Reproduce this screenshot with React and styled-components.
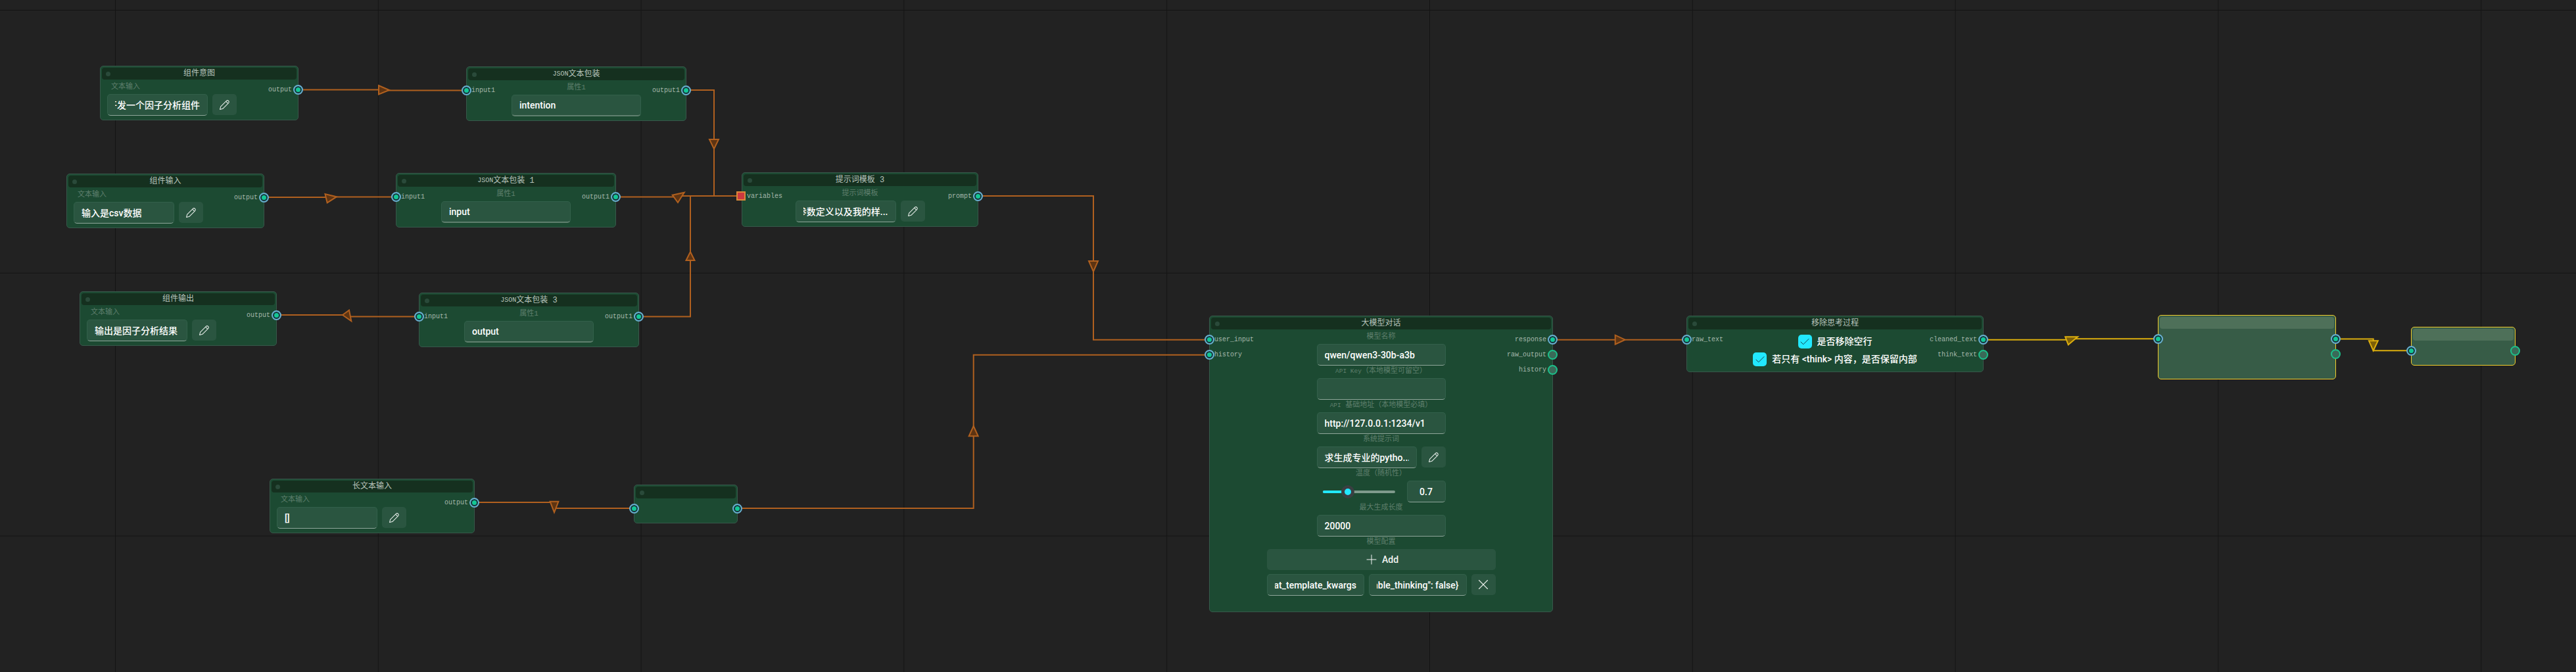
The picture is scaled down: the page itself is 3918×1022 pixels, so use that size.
import styled, { createGlobalStyle } from "styled-components";
import { Plus, X, Check } from "lucide-react";

const GlobalStyle = createGlobalStyle`
    html, body {
        margin: 0;
        padding: 0;
        background: #222222;
        overflow: hidden;
    }
`;

const MONO = `"Liberation Mono", "Noto Sans CJK SC", monospace`;
const UI = `Roboto, "Noto Sans CJK SC", sans-serif`;

const Canvas = styled.div`
    position: relative;
    width: 3918px;
    height: 1022px;
    overflow: hidden;
    background-color: #222222;
    background-image:
        linear-gradient(to right, #141414 1px, transparent 1px),
        linear-gradient(to bottom, #141414 1px, transparent 1px);
    background-size: 399.8px 399.8px;
    background-position: 175px 15px;
`;

const WireLayer = styled.svg`
    position: absolute;
    left: 0;
    top: 0;
    width: 3918px;
    height: 1022px;
    pointer-events: none;
`;

const NodeBox = styled.div`
    position: absolute;
    left: ${(p) => p.$x}px;
    top: ${(p) => p.$y}px;
    width: ${(p) => p.$w}px;
    height: ${(p) => p.$h}px;
    box-sizing: border-box;
    display: flex;
    flex-direction: column;
    border-radius: 5px;
    background: ${(p) => (p.$selected ? "#375c47" : "#1c4a32")};
    border: 1px solid ${(p) => (p.$selected ? "#f2cc2c" : "#37584a")};
`;

const Header = styled.div`
    position: relative;
    flex: none;
    height: 18px;
    margin: 2px 2px 0;
    border-radius: 4px;
    background: ${(p) => (p.$selected ? "#4e7059" : "#15301f")};
    display: flex;
    align-items: center;
    justify-content: center;
    font: 12px/18px ${MONO};
    color: #b8c4bc;
    white-space: nowrap;
`;

const Latin = styled.span`
    font-size: ${(p) => p.$size}px;
`;

const Dot = styled.span`
    position: absolute;
    left: 6px;
    top: 6px;
    width: 7px;
    height: 7px;
    border-radius: 50%;
    background: #2a4a3a;
`;

const Body = styled.div`
    flex: 1;
    display: grid;
    grid-template-columns: ${(p) => p.$cols};
    padding: 3px 0 0 ${(p) => p.$pad || 0}px;
`;

const Ports = styled.div`
    display: flex;
    flex-direction: column;
    padding-top: 1px;
    align-items: ${(p) => (p.$side === "right" ? "flex-end" : "flex-start")};
`;

const PortRow = styled.div`
    position: relative;
    height: 23px;
    display: flex;
    align-items: center;
    padding: ${(p) => (p.$side === "right" ? "0 9px 0 0" : "0 0 0 7px")};
    font: 10px/12px ${MONO};
    color: #a6b8ac;
    white-space: nowrap;
`;

const Socket = styled.span`
    position: absolute;
    top: 4px;
    ${(p) => (p.$side === "right" ? "right: -8px;" : "left: -8px;")}
    width: 15px;
    height: 15px;
    box-sizing: border-box;
    border-radius: 50%;
    border: 2px solid ${(p) => (p.$free ? "#1cc08a" : "#6aaed0")};
    background: ${(p) => (p.$free ? "#3a6a58" : "#13c795")};
    box-shadow: ${(p) => (p.$free ? "none" : "inset 0 0 0 2px #17303a")};
`;

const SquareSocket = styled.span`
    position: absolute;
    top: 4px;
    left: -9px;
    width: 14px;
    height: 14px;
    box-sizing: border-box;
    border: 2px solid #d98a3a;
    background: #cc3a3f;
`;

const Stack = styled.div`
    display: flex;
    flex-direction: column;
    align-items: center;
    min-width: 0;
`;

const FieldLabel = styled.div`
    align-self: ${(p) => (p.$left ? "flex-start" : "center")};
    height: 19px;
    padding-left: ${(p) => (p.$left ? 6 : 0)}px;
    font: 11px/16px ${MONO};
    color: #5f7f6d;
    white-space: nowrap;
`;

const Field = styled.div`
    box-sizing: border-box;
    flex: ${(p) => (p.$grow ? 1 : "none")};
    width: ${(p) => (p.$w ? `${p.$w}px` : "auto")};
    min-width: 0;
    height: 33px;
    padding: 0 11px;
    display: flex;
    align-items: center;
    justify-content: ${(p) => (p.$center ? "center" : "flex-start")};
    background: #2a5540;
    border: 1px solid #32604a;
    border-bottom: ${(p) => (p.$thick ? "2px solid #5f7f6e" : "1px solid #8fa69a")};
    border-radius: 5px;
    font: 500 14px/20px ${UI};
    color: #ffffff;
`;

const FieldText = styled.div`
    flex: 1;
    min-width: 0;
    display: flex;
    justify-content: ${(p) => (p.$end ? "flex-end" : "flex-start")};
    overflow: hidden;
    white-space: nowrap;
`;

const FieldRow = styled.div`
    width: ${(p) => p.$w}px;
    display: flex;
    gap: 7px;
    align-items: flex-start;
`;

const IconButton = styled.div`
    flex: none;
    width: 37px;
    height: 32px;
    display: flex;
    align-items: center;
    justify-content: center;
    border-radius: 5px;
    background: #2a5540;
    color: #e8eeea;
`;

const SliderRow = styled.div`
    width: 196px;
    height: 33px;
    display: flex;
    align-items: center;
    justify-content: space-between;
    padding-left: 9px;
    box-sizing: border-box;
`;

const Track = styled.div`
    position: relative;
    width: 110px;
    height: 4px;
    border-radius: 2px;
    background: #7f9a8c;
`;

const TrackFill = styled.div`
    height: 4px;
    border-radius: 2px;
    background: #22e8ff;
`;

const Knob = styled.div`
    position: absolute;
    top: -8px;
    width: 20px;
    height: 20px;
    margin-left: -10px;
    box-sizing: border-box;
    border-radius: 50%;
    background: #22e8ff;
    border: 5px solid #3a3f42;
`;

const AddButton = styled.div`
    width: 348px;
    height: 32px;
    margin-bottom: 6px;
    display: flex;
    align-items: center;
    justify-content: center;
    gap: 4px;
    border-radius: 5px;
    background: #2a5540;
    font: 500 14px/20px ${UI};
    color: #f2f5f3;
`;

const CheckList = styled.div`
    display: flex;
    flex-direction: column;
    align-items: center;
    gap: 6px;
    padding-top: 5px;
`;

const CheckRow = styled.div`
    display: flex;
    align-items: center;
    gap: 8px;
    height: 21px;
    font: 500 14px/21px ${UI};
    color: #ffffff;
    white-space: nowrap;
`;

const CheckBox = styled.span`
    width: 21px;
    height: 21px;
    display: flex;
    align-items: center;
    justify-content: center;
    border-radius: 5px;
    background: #22e8ff;
    color: #10303a;
`;

function PencilIcon() {
    return (
        <svg width="17" height="17" viewBox="0 0 16 16" fill="none" stroke="currentColor" strokeWidth="1" strokeLinejoin="round">
            <path d="M1.5 14.5L2.5 10.5L11 2Q12.3 .9 13.7 2.2Q15 3.6 14 5L5.5 13.5ZM10 3L13 6" />
        </svg>
    );
}

function Node({ x, y, w, h, title, selected, children }) {
    return (
        <NodeBox $x={x} $y={y} $w={w} $h={h} $selected={selected}>
            <Header $selected={selected}>
                {!selected && <Dot />}
                {title}
            </Header>
            {children}
        </NodeBox>
    );
}

function PortList({ side, items }) {
    return (
        <Ports $side={side}>
            {items.map((item) => (
                <PortRow key={item.name || item.id} $side={side}>
                    {item.square ? <SquareSocket /> : <Socket $side={side} $free={item.free} />}
                    {item.name}
                </PortRow>
            ))}
        </Ports>
    );
}

function TextField({ w, grow, thick, end, children }) {
    return (
        <Field $w={w} $grow={grow} $thick={thick}>
            <FieldText $end={end}>{children}</FieldText>
        </Field>
    );
}

function EditButton() {
    return (
        <IconButton>
            <PencilIcon />
        </IconButton>
    );
}

function TextInputNode({ x, y, w, title, value, end }) {
    return (
        <Node x={x} y={y} w={w} h={83} title={title}>
            <Body $cols="197px 1fr" $pad={10}>
                <Stack>
                    <FieldLabel $left>文本输入</FieldLabel>
                    <FieldRow $w={197}>
                        <TextField grow end={end}>{value}</TextField>
                        <EditButton />
                    </FieldRow>
                </Stack>
                <PortList side="right" items={[{ name: "output" }]} />
            </Body>
        </Node>
    );
}

function JsonNode({ x, y, suffix, value }) {
    return (
        <Node x={x} y={y} w={335} h={83} title={<><Latin $size={10}>JSON</Latin>文本包装{suffix}</>}>
            <Body $cols="1fr 197px 1fr">
                <PortList side="left" items={[{ name: "input1" }]} />
                <Stack>
                    <FieldLabel>属性1</FieldLabel>
                    <TextField w={197} thick>{value}</TextField>
                </Stack>
                <PortList side="right" items={[{ name: "output1" }]} />
            </Body>
        </Node>
    );
}

function PromptNode() {
    return (
        <Node x={1128} y={262} w={360} h={83} title="提示词模板 3">
            <Body $cols="1fr 197px 1fr">
                <PortList side="left" items={[{ name: "variables", square: true }]} />
                <Stack>
                    <FieldLabel>提示词模板</FieldLabel>
                    <FieldRow $w={197}>
                        <TextField grow end>参数定义以及我的样...</TextField>
                        <EditButton />
                    </FieldRow>
                </Stack>
                <PortList side="right" items={[{ name: "prompt" }]} />
            </Body>
        </Node>
    );
}

function ChatNode() {
    return (
        <Node x={1839} y={480} w={523} h={451} title="大模型对话">
            <Body $cols="1fr 348px 1fr">
                <PortList side="left" items={[{ name: "user_input" }, { name: "history" }]} />
                <Stack>
                    <FieldLabel>模型名称</FieldLabel>
                    <TextField w={196}>qwen/qwen3-30b-a3b</TextField>
                    <FieldLabel><Latin $size={9.5}>API Key</Latin>（本地模型可留空）</FieldLabel>
                    <TextField w={196} />
                    <FieldLabel><Latin $size={9.5}>API</Latin> 基础地址（本地模型必填）</FieldLabel>
                    <TextField w={196}>http://127.0.0.1:1234/v1</TextField>
                    <FieldLabel>系统提示词</FieldLabel>
                    <FieldRow $w={196}>
                        <TextField grow>求生成专业的pytho...</TextField>
                        <EditButton />
                    </FieldRow>
                    <FieldLabel>温度（随机性）</FieldLabel>
                    <SliderRow>
                        <Track>
                            <TrackFill style={{ width: "35%" }} />
                            <Knob style={{ left: "35%" }} />
                        </Track>
                        <Field $w={59} $center>0.7</Field>
                    </SliderRow>
                    <FieldLabel>最大生成长度</FieldLabel>
                    <TextField w={196}>20000</TextField>
                    <FieldLabel>模型配置</FieldLabel>
                    <AddButton>
                        <Plus size={24} strokeWidth={1} />
                        Add
                    </AddButton>
                    <FieldRow $w={348}>
                        <TextField grow end>chat_template_kwargs</TextField>
                        <TextField grow end>{'{"enable_thinking": false}'}</TextField>
                        <IconButton>
                            <X size={26} strokeWidth={1} />
                        </IconButton>
                    </FieldRow>
                </Stack>
                <PortList
                    side="right"
                    items={[{ name: "response" }, { name: "raw_output", free: true }, { name: "history", free: true }]}
                />
            </Body>
        </Node>
    );
}

function ThinkNode() {
    return (
        <Node x={2565} y={480} w={452} h={86} title="移除思考过程">
            <Body $cols="1fr auto 1fr">
                <PortList side="left" items={[{ name: "raw_text" }]} />
                <CheckList>
                    <CheckRow>
                        <CheckBox><Check size={18} strokeWidth={1.2} /></CheckBox>
                        是否移除空行
                    </CheckRow>
                    <CheckRow>
                        <CheckBox><Check size={18} strokeWidth={1.2} /></CheckBox>
                        若只有 &lt;think&gt; 内容，是否保留内部
                    </CheckRow>
                </CheckList>
                <PortList side="right" items={[{ name: "cleaned_text" }, { name: "think_text", free: true }]} />
            </Body>
        </Node>
    );
}

function BlankNode({ x, y, w, h, selected, right }) {
    return (
        <Node x={x} y={y} w={w} h={h} selected={selected}>
            <Body $cols="1fr 1fr">
                <PortList side="left" items={[{ id: "in" }]} />
                <PortList side="right" items={right} />
            </Body>
        </Node>
    );
}

const ORANGE = "#b0601f";
const YELLOW = "#dcae0e";

const WIRES = [
    "M461 136.5H584V137.5H708",
    "M403 300H501V299.5H602",
    "M937 299.5H1031V298H1120",
    "M1045 137H1086V298",
    "M973 481.5H1050V298",
    "M636 481.5H527V479H422",
    "M724 764H843V773H963",
    "M1123 773H1480.7V539.7H1838",
    "M1488 298H1663V516.7H1838",
    "M2363 516.7H2564",
];

const YELLOW_WIRES = ["M3017.5 516.7H3150V515.3H3281.5", "M3553 515.5H3609.7V533.3H3666"];

const ARROWS = [
    "576,130 576,143.5 592,137",
    "494.5,295 497.7,308.3 511.8,299.3",
    "1040.7,292.7 1022.7,296.7 1031,308",
    "1079,212 1093,212 1086,226.5",
    "1043.5,396 1056.5,396 1050,383",
    "521,479 531,471.7 534.3,488.3",
    "836.6,762.7 849.4,762.7 843,779.3",
    "1473.7,663.3 1487.7,663.3 1480.7,648",
    "1656,397 1670,397 1663,413",
    "2456.7,509.7 2456.7,523.7 2471.7,516.7",
];

const YELLOW_ARROWS = ["3141.2,512.3 3160,512.3 3145.8,524.3", "3603,518.3 3616.8,518.3 3609.7,533.3"];

function App() {
    return (
        <Canvas>
            <GlobalStyle />
            <WireLayer viewBox="0 0 3918 1022">
                {WIRES.map((d) => <path key={d} d={d} fill="none" stroke={ORANGE} strokeWidth="2" />)}
                {YELLOW_WIRES.map((d) => <path key={d} d={d} fill="none" stroke={YELLOW} strokeWidth="2" />)}
                {ARROWS.map((p) => <polygon key={p} points={p} fill="#5e3412" stroke={ORANGE} strokeWidth="2" />)}
                {YELLOW_ARROWS.map((p) => <polygon key={p} points={p} fill="#7d5f08" stroke={YELLOW} strokeWidth="2" />)}
            </WireLayer>

            <TextInputNode x={152} y={100} w={302} title="组件意图" value="开发一个因子分析组件" end />
            <JsonNode x={709} y={101} value="intention" />
            <TextInputNode x={101} y={264} w={301} title="组件输入" value="输入是csv数据" />
            <JsonNode x={602} y={263} suffix=" 1" value="input" />
            <PromptNode />
            <TextInputNode x={121} y={443} w={300} title="组件输出" value="输出是因子分析结果" />
            <JsonNode x={637} y={445} suffix=" 3" value="output" />
            <TextInputNode x={410} y={728} w={312} title="长文本输入" value="[]" />
            <BlankNode x={964} y={737} w={158} h={59} right={[{ id: "out" }]} />
            <ChatNode />
            <ThinkNode />
            <BlankNode x={3282} y={479} w={271} h={98} selected right={[{ id: "a" }, { id: "b", free: true }]} />
            <BlankNode x={3667} y={497} w={159} h={59} selected right={[{ id: "c", free: true }]} />
        </Canvas>
    );
}

export default App;
